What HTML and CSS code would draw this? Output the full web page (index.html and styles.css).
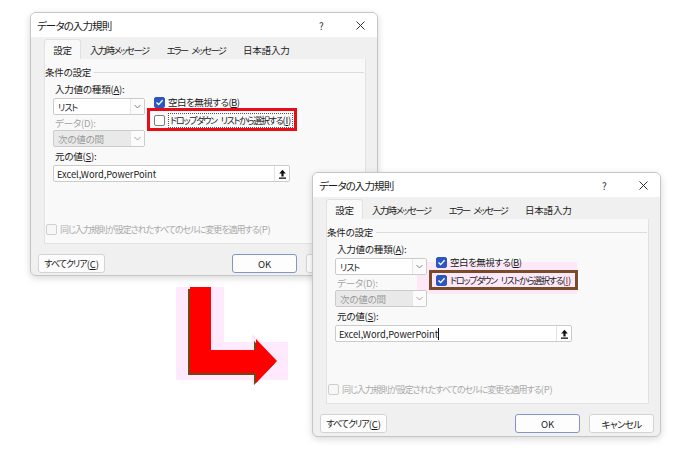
FILE: index.html
```html
<!DOCTYPE html>
<html lang="ja">
<head>
<meta charset="utf-8">
<title>データの入力規則</title>
<link rel="stylesheet" href="styles.css">
</head>
<body>
<div class="canvas">

  <!-- Dialog 1 (before) -->
  <div class="dialog d1">
    <div class="titlebar">
      <span class="title">データの入力規則</span>
      <span class="help">?</span>
      <svg class="close" width="9" height="9" viewBox="0 0 9 9"><path d="M0.5 0.5 L8.5 8.5 M8.5 0.5 L0.5 8.5" stroke="#333" stroke-width="1"/></svg>
    </div>
    <div class="body">
      <div class="tabs">
        <div class="tab active">設定</div>
        <div class="tab k">入力時メッセージ</div>
        <div class="tab k k3">エラー メッセージ</div>
        <div class="tab">日本語入力</div>
      </div>
      <div class="page">
        <div class="gtitle"><span>条件の設定</span><i class="gline"></i></div>
        <div class="main">
          <div class="leftcol">
            <div class="lbl">入力値の種類(<u>A</u>):</div>
            <div class="combo"><span class="ctext"><span class="k">リスト</span></span><span class="cbtn"><svg width="7" height="5" viewBox="0 0 7 5"><path d="M0.5 1 L3.5 4 L6.5 1" stroke="#777" fill="none" stroke-width="0.9"/></svg></span></div>
            <div class="lbl dis">データ(D):</div>
            <div class="combo disabled"><span class="ctext">次の値の間</span><span class="cbtn"><svg width="7" height="5" viewBox="0 0 7 5"><path d="M0.5 1 L3.5 4 L6.5 1" stroke="#999" fill="none" stroke-width="0.9"/></svg></span></div>
          </div>
          <div class="rightcol">
            <div class="chkrow r1"><span class="chk on"><svg width="11" height="11" viewBox="0 0 11 11"><path d="M2.5 5.6 L4.6 7.6 L8.6 3.2" stroke="#fff" stroke-width="1.4" fill="none"/></svg></span><span class="mid">空白を無視する(<u>B</u>)</span></div>
            <div class="chkrow r2">
              <i class="redbox"></i>
              <span class="chk"></span><span class="focus"><span class="k dd">ドロップダウン リストから選択する</span>(<u>I</u>)</span>
            </div>
          </div>
        </div>
        <div class="lbl lbl3">元の値(<u>S</u>):</div>
        <div class="input"><span class="itext">Excel,Word,PowerPoint</span><span class="ibtn"><svg width="9" height="10" viewBox="0 0 9 10"><path d="M4.5 0.8 L1.2 4.4 H3.4 V7.4 H5.6 V4.4 H7.8 Z" fill="#111"/><rect x="1" y="8.5" width="7" height="1.3" fill="#111"/></svg></span></div>
        <div class="chkrow apply"><span class="chk off-dis"></span><span><span class="k">同じ入力規則が設定されたすべてのセルに変更を適用する</span>(P)</span></div>
      </div>
      <div class="buttons">
        <div class="btn clear"><span class="k">すべてクリア</span>(<u>C</u>)</div>
        <div class="btn ok">OK</div>
        <div class="btn cancel"></div>
      </div>
    </div>
  </div>

  <!-- Dialog 2 (after) -->
  <div class="dialog d2">
    <div class="titlebar">
      <span class="title">データの入力規則</span>
      <span class="help">?</span>
      <svg class="close" width="9" height="9" viewBox="0 0 9 9"><path d="M0.5 0.5 L8.5 8.5 M8.5 0.5 L0.5 8.5" stroke="#333" stroke-width="1"/></svg>
    </div>
    <div class="body">
      <div class="tabs">
        <div class="tab active">設定</div>
        <div class="tab k">入力時メッセージ</div>
        <div class="tab k k3">エラー メッセージ</div>
        <div class="tab">日本語入力</div>
      </div>
      <div class="page">
        <div class="gtitle"><span>条件の設定</span><i class="gline"></i></div>
        <div class="main">
          <div class="leftcol">
            <div class="lbl">入力値の種類(<u>A</u>):</div>
            <div class="combo"><span class="ctext"><span class="k">リスト</span></span><span class="cbtn"><svg width="7" height="5" viewBox="0 0 7 5"><path d="M0.5 1 L3.5 4 L6.5 1" stroke="#777" fill="none" stroke-width="0.9"/></svg></span></div>
            <div class="lbl dis">データ(D):</div>
            <div class="combo disabled"><span class="ctext">次の値の間</span><span class="cbtn"><svg width="7" height="5" viewBox="0 0 7 5"><path d="M0.5 1 L3.5 4 L6.5 1" stroke="#999" fill="none" stroke-width="0.9"/></svg></span></div>
          </div>
          <div class="rightcol">
            <div class="chkrow r1"><span class="chk on"><svg width="11" height="11" viewBox="0 0 11 11"><path d="M2.5 5.6 L4.6 7.6 L8.6 3.2" stroke="#fff" stroke-width="1.4" fill="none"/></svg></span><span class="mid">空白を無視する(<u>B</u>)</span></div>
            <div class="chkrow r2">
              <i class="pinkglow"></i>
              <i class="brownbox"></i>
              <span class="chk on"><svg width="11" height="11" viewBox="0 0 11 11"><path d="M2.5 5.6 L4.6 7.6 L8.6 3.2" stroke="#fff" stroke-width="1.4" fill="none"/></svg></span><span class="plain"><span class="k dd">ドロップダウン リストから選択する</span>(<u class="red">I</u>)</span>
            </div>
          </div>
        </div>
        <div class="lbl lbl3">元の値(<u>S</u>):</div>
        <div class="input"><span class="itext">Excel,Word,PowerPoint<i class="caret"></i></span><span class="ibtn"><svg width="9" height="10" viewBox="0 0 9 10"><path d="M4.5 0.8 L1.2 4.4 H3.4 V7.4 H5.6 V4.4 H7.8 Z" fill="#111"/><rect x="1" y="8.5" width="7" height="1.3" fill="#111"/></svg></span></div>
        <div class="chkrow apply"><span class="chk off-dis"></span><span><span class="k">同じ入力規則が設定されたすべてのセルに変更を適用する</span>(P)</span></div>
      </div>
      <div class="buttons">
        <div class="btn clear"><span class="k">すべてクリア</span>(<u>C</u>)</div>
        <div class="btn ok">OK</div>
        <div class="btn cancel"><span class="k">キャンセル</span></div>
      </div>
    </div>
  </div>

  <!-- Arrow -->
  <svg class="arrow" width="120" height="115" viewBox="0 0 120 115">
    <g fill="#ffeafd">
      <rect x="0" y="11" width="48" height="88"/>
      <rect x="0" y="66" width="112" height="38"/>
      <polygon points="76,58 110,85 76,110"/>
    </g>
    <polygon points="12,13 33,13 33,76 78,76 78,65 99,87 78,109 78,99 12,99" fill="#6e4a12"/>
    <polygon points="14,11 35,11 35,74 80,74 80,63 101,85 80,107 80,97 14,97" fill="#ff0000"/>
  </svg>

</div>
</body>
</html>
```

FILE: styles.css
```css
* { box-sizing: border-box; }

html, body {
  margin: 0;
  padding: 0;
  background: #ffffff;
}

body {
  font-family: "Noto Sans CJK JP", "Noto Sans", sans-serif;
  font-size: 9.5px;
  letter-spacing: -0.2px;
  font-feature-settings: "palt";
  color: #1b1b1b;
  white-space: nowrap;
}

.k { font-size: 9px; letter-spacing: -1px; word-spacing: 3px; }
.k.dd { letter-spacing: -1.25px; }

.canvas {
  position: relative;
  width: 700px;
  height: 466px;
  overflow: hidden;
}

/* ---------- dialog window ---------- */
.dialog {
  position: absolute;
  background: #f0f0f0;
  border: 1px solid #c6c6c6;
  border-radius: 6px;
  box-shadow: 0 2px 7px rgba(0, 0, 0, 0.16);
  overflow: hidden;
  display: flex;
  flex-direction: column;
}
.d1 { left: 30px; top: 12px; width: 348px; height: 264px; }
.d2 { left: 312px; top: 172px; width: 349px; height: 265px; }

.titlebar {
  height: 24px;
  background: #ffffff;
  display: flex;
  align-items: center;
  padding-left: 6px;
  flex-shrink: 0;
}
.title { font-size: 10.5px; letter-spacing: -0.9px; flex: 1; color: #1a1a1a; }
.help { font-size: 10px; color: #333; width: 10px; margin-right: 27px; }
.close { margin-right: 12px; }

.body {
  flex: 1;
  padding: 2px 11px 0 13px;
  display: flex;
  flex-direction: column;
}

/* ---------- tabs ---------- */
.tabs {
  display: flex;
  height: 20px;
  align-items: stretch;
}
.tab {
  padding: 0 8px;
  display: flex;
  align-items: center;
  color: #1b1b1b;
  border: 1px solid transparent;
  border-bottom: none;
}
.tab.k { font-size: 9.2px; letter-spacing: -1.35px; word-spacing: 4px; }
.tab.k3 { letter-spacing: -1.65px; word-spacing: 3.5px; }
.tab.active {
  width: 37px;
  padding: 0;
  justify-content: center;
  background: #f9f9f9;
  border-color: #e2e2e2;
  border-radius: 3px 3px 0 0;
}

.page {
  height: 185px;
  background: #f9f9f9;
  border: 1px solid #e2e2e2;
  border-top: none;
  padding: 0 1px 0 0;
}

.gtitle {
  margin-top: 6px;
  height: 14px;
  display: flex;
  align-items: center;
  gap: 3px;
}
.gline { flex: 1; height: 1px; background: #dcdcdc; }

.main {
  margin-top: 3px;
  display: grid;
  grid-template-columns: 92px auto;
  column-gap: 9px;
  padding-left: 8px;
}
.leftcol { display: flex; flex-direction: column; position: relative; z-index: 2; }
.rightcol { display: flex; flex-direction: column; }

.lbl { height: 14px; line-height: 14px; padding-left: 2px; }
.lbl.dis { color: #a3a3a3; margin-top: 1px; }
.lbl3 { margin-top: 2px; padding-left: 10px; }

.combo {
  height: 17px;
  margin-top: 2px;
  background: #ffffff;
  border: 1px solid #cbcbcb;
  border-radius: 2px;
  display: flex;
  align-items: center;
}
.combo.disabled { background: #e9e9e9; margin-top: 0; color: #9a9a9a; }
.ctext { flex: 1; padding-left: 4px; }
.cbtn {
  width: 14px;
  height: 100%;
  border-left: 1px solid #e6e6e6;
  background: #fbfbfb;
  display: flex;
  align-items: center;
  justify-content: center;
}

.chkrow {
  position: relative;
  height: 14px;
  display: flex;
  align-items: center;
  gap: 2px;
}
.chkrow.r1 { margin-top: 13px; }
.chkrow.r2 { margin-top: 4px; }
.mid { letter-spacing: -0.5px; padding-left: 1px; }

.chk {
  position: relative;
  z-index: 1;
  width: 11px;
  height: 11px;
  border: 1px solid #7d7d7d;
  border-radius: 2px;
  background: #ffffff;
  display: flex;
  flex-shrink: 0;
}
.chk.on { background: #2d57c0; border-color: #2d57c0; }
.chk.on svg { margin: -1px; }
.chk.off-dis { border-color: #cfcfcf; background: #f7f7f7; }
.chkrow span { position: relative; z-index: 1; }

.focus {
  border: 1px dotted #555;
  padding: 0 1px;
  line-height: 12px;
  margin-left: 1px;
}
.plain { padding-left: 1px; }
u.red { color: #a23636; }

.redbox {
  position: absolute;
  left: -7px;
  top: -5px;
  width: 150px;
  height: 23px;
  border: 3px solid #e60d17;
}
.pinkglow {
  position: absolute;
  left: -19px;
  top: -11px;
  width: 160px;
  height: 32px;
  background: #fde8f8;
}
.brownbox {
  position: absolute;
  left: -7px;
  top: -3px;
  width: 149px;
  height: 20px;
  border: 3px solid #7a4a2c;
}

.input {
  margin: 2px 0 0 8px;
  width: 237px;
  height: 17px;
  background: #ffffff;
  border: 1px solid #cbcbcb;
  border-radius: 2px;
  display: flex;
  align-items: center;
  font-size: 9.3px;
  letter-spacing: -0.05px;
}
.itext { flex: 1; padding-left: 3px; display: flex; align-items: center; }
.caret { display: inline-block; width: 1px; height: 12px; background: #111; }
.ibtn {
  width: 15px;
  height: 100%;
  border-left: 1px solid #e3e3e3;
  display: flex;
  align-items: center;
  justify-content: center;
}

.chkrow.apply { margin-top: 40px; padding-left: 1px; color: #a9a9a9; gap: 3px; }

/* ---------- buttons ---------- */
.buttons {
  margin: 10px -5px 0 -6px;
  display: flex;
  gap: 9px;
}
.btn {
  width: 65px;
  height: 19px;
  background: #fdfdfd;
  border: 1px solid #d3d3d3;
  border-radius: 3px;
  display: flex;
  align-items: center;
  justify-content: center;
}
.btn.clear { width: 67px; margin-right: auto; }
.btn.cancel .k { font-size: 9.5px; letter-spacing: -0.6px; }
.btn.ok { border-color: #8196c6; }

/* ---------- arrow ---------- */
.arrow {
  position: absolute;
  left: 176px;
  top: 276px;
}
```
